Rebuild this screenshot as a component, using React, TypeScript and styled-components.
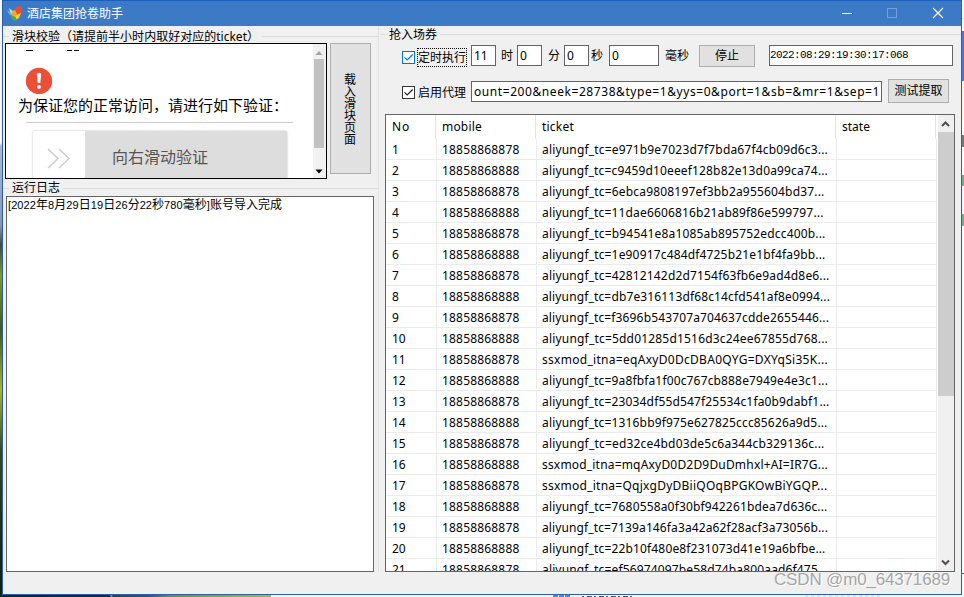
import React, { useLayoutEffect, useRef, useState } from "react";
import styled, { createGlobalStyle } from "styled-components";

const Global = createGlobalStyle`
  * { box-sizing: border-box; }
  html, body { margin: 0; padding: 0; overflow: hidden; }
  body {
    font-family: "Noto Sans", "Noto Sans CJK SC", sans-serif;
    font-size: 12px;
    color: #000;
  }
`;

const Desktop = styled.div`
  width: 964px;
  height: 597px;
  display: grid;
  grid-template-columns: 2px 960px 2px;
  grid-template-rows: 595px 2px;
  overflow: hidden;
`;

const LeftEdge = styled.div`
  background: linear-gradient(#f4f6fa 0 143px, #a9b9da 146px, #8798b5 225px, #3f4a44 245px, #7b9a2d 275px, #3b5a1c 330px, #a4b72c 390px, #33491a 450px, #1b2a18 540px, #11200f);
`;

const RightEdge = styled.div`
  background: linear-gradient(#fff 0 18px, #d9e5f2 18px 19px, #fff 19px 31px, #4a74e8 31px 81px, #fdf4e3 81px 120px, #fff 120px 135px, #777 135px 147px, #fff 147px 175px, #62b990 175px 186px, #f2f5fc 186px 214px, #62b990 214px 226px, #f5fdff 226px 573px, #3574ad 573px 574px, #f5fdff 574px);
`;

const BottomEdge = styled.div`
  grid-column: 1 / -1;
  display: flex;
  background: #f1faff;
`;

const Meadow = styled.div`
  width: 271px;
  background: linear-gradient(90deg, #16281a, #173022 110px, #7fa0a0 111px, #2c4a26 113px, #3c5570 150px, #6f8f28 170px, #8fae2c 230px, #b2b52b);
`;

const Window = styled.div`
  display: flex;
  flex-direction: column;
  border: 1px solid #2a60a8;
  border-top-color: #1d60bc;
  background: #f0f0f0;
  position: relative;
`;

const TitleBar = styled.header`
  height: 25px;
  flex: none;
  display: flex;
  align-items: center;
  background: #3d7ac6;
  color: #fff;
  padding-left: 4px;
`;

const Title = styled.span`
  flex: 1;
  padding-left: 4px;
  line-height: 24px;
`;

const Controls = styled.div`
  display: flex;
  width: 119px;
  height: 25px;
`;

const Body = styled.main`
  flex: 1;
  display: flex;
  min-height: 0;
`;

const LeftPane = styled.section`
  width: 376px;
  flex: none;
  border-right: 1px solid #e0e0e0;
  height: 546px;
  display: flex;
  flex-direction: column;
`;

const RightPane = styled.section`
  flex: 1;
  min-width: 0;
  padding-left: 2px;
  display: flex;
  flex-direction: column;
`;

const Legend = styled.div<{ $h: number; $pad: number; $top?: number }>`
  height: ${(p) => p.$h}px;
  padding-top: ${(p) => p.$top ?? 0}px;
  flex: none;
  display: flex;
  align-items: center;
  white-space: nowrap;
  line-height: ${(p) => p.$h - (p.$top ?? 0)}px;
  &::before { content: ""; width: ${(p) => p.$pad - 3}px; margin-right: 3px; height: 1px; background: #dcdcdc; }
  &::after { content: ""; flex: 1; margin-left: 3px; height: 1px; background: #dcdcdc; }
`;

const SliderRow = styled.div`
  display: flex;
  gap: 3px;
  padding-left: 2px;
  height: 136px;
  flex: none;
`;

const Browser = styled.div`
  width: 322px;
  height: 136px;
  border: 1px solid #000;
  background: #fff;
  display: flex;
  overflow: hidden;
`;

const PageView = styled.div`
  width: 307px;
  display: flex;
  flex-direction: column;
  flex: none;
  overflow: hidden;
  > svg { display: block; flex: none; }
`;

const Notice = styled.div`
  padding-left: 12px;
  height: 23px;
  line-height: 22px;
  font-size: 15px;
  white-space: nowrap;
  flex: none;
`;

const Rule = styled.div`
  margin: 5px 0 8px 20px;
  height: 1px;
  width: 267px;
  background: #ccc;
  flex: none;
`;

const Slider = styled.div`
  margin-left: 27px;
  width: 254px;
  height: 56px;
  flex: none;
  display: flex;
  background: #ddd;
  border-radius: 2px;
  box-shadow: 0 0 2px #aaa;
`;

const Handle = styled.div`
  width: 52px;
  background: #fff;
  border-radius: 2px 0 0 2px;
`;

const SliderText = styled.div`
  padding-left: 27px;
  line-height: 52px;
  font-size: 16px;
  color: #555;
`;

const MiniScroll = styled.div`
  width: 13px;
  background: #f1f1f1;
  display: flex;
  flex-direction: column;
  align-items: center;
  padding-right: 1px;
`;

const MiniThumb = styled.div`
  width: 10px;
  height: 89px;
  background: #c1c1c1;
`;

const LoadButton = styled.button`
  width: 41px;
  height: 131px;
  padding: 0 14px 0 13px;
  border: 1px solid #adadad;
  background: #e1e1e1;
  font: 12px/12px "Noto Sans CJK SC", sans-serif;
  color: #000;
  word-break: break-all;
`;

const Log = styled.div`
  margin-left: 3px;
  width: 368px;
  height: 377px;
  border: 1px solid #646464;
  background: #fff;
  padding-left: 1px;
  line-height: 13px;
  white-space: nowrap;
  font-family: "Noto Sans CJK SC", sans-serif;
`;

const HalfWidth = styled.span`
  font: 11px/13px "Liberation Sans", sans-serif;
  letter-spacing: 0.1px;
`;

const Form = styled.div<{ $h: number }>`
  display: flex;
  align-items: center;
  height: ${(p) => p.$h}px;
  flex: none;
  padding-left: 21px;
  white-space: nowrap;
`;

const ProxyForm = styled(Form)`
  margin-top: 11px;
`;

const Check = styled.span<{ $active?: boolean }>`
  width: 13px;
  height: 13px;
  flex: none;
  margin-top: ${(p) => (p.$active ? 4 : 2)}px;
  border: 1px solid ${(p) => (p.$active ? "#0078d7" : "#333")};
  color: ${(p) => (p.$active ? "#0078d7" : "#222")};
  background: #fff;
  svg { display: block; }
`;

const CheckLabel = styled.span<{ $active?: boolean }>`
  margin: ${(p) => (p.$active ? "3px 4px 0 2px" : "2px 4px 0 2px")};
  width: 50px;
  height: 19px;
  line-height: 17px;
  border: 1px ${(p) => (p.$active ? "dotted #000" : "solid transparent")};
`;

const Input = styled.div<{ $w: number; $mono?: boolean }>`
  width: ${(p) => p.$w}px;
  height: 21px;
  flex: none;
  border: 1px solid #646464;
  background: #fff;
  padding-left: ${(p) => (p.$mono ? 0 : 2)}px;
  line-height: ${(p) => (p.$mono ? 18 : 19)}px;
  overflow: hidden;
  ${(p) => p.$mono && 'font-family: "Liberation Mono", monospace; font-size: 11px;'}
`;

const Unit = styled.span<{ $w: number; $pad: number }>`
  width: ${(p) => p.$w}px;
  padding-left: ${(p) => p.$pad}px;
  flex: none;
  line-height: 20px;
`;

const Button = styled.button<{ $w: number; $h: number; $ml: number }>`
  width: ${(p) => p.$w}px;
  height: ${(p) => p.$h}px;
  margin-left: ${(p) => p.$ml}px;
  flex: none;
  padding: 0 0 2px;
  border: 1px solid #adadad;
  background: #e1e1e1;
  font: 12px/18px "Noto Sans CJK SC", sans-serif;
  color: #000;
`;

const Spacer = styled.span<{ $w: number }>`
  width: ${(p) => p.$w}px;
  flex: none;
`;

const Grid = styled.div`
  margin: 11px 0 0 4px;
  width: 570px;
  height: 458px;
  border: 1px solid #646464;
  background: #fff;
  display: flex;
  overflow: hidden;
`;

const Table = styled.div`
  width: 552px;
  flex: none;
`;

const HeadRow = styled.div`
  display: grid;
  grid-template-columns: 50px 100px 300px 100px;
  height: 24px;
  line-height: 23px;
`;

const HeadCell = styled.div`
  border-right: 1px solid #e4e4e4;
  padding-left: 6px;
`;

const Row = styled.div`
  display: grid;
  grid-template-columns: 51px 100px 300px 100px;
  width: 551px;
  height: 21px;
  line-height: 21px;
  border-bottom: 1px solid #ececec;
`;

const Cell = styled.div<{ $first?: boolean }>`
  border-right: 1px solid #ececec;
  padding-left: ${(p) => (p.$first ? 6 : 5)}px;
  white-space: nowrap;
  overflow: hidden;
`;

const ScrollBar = styled.div`
  width: 16px;
  background: #f0f0f0;
  display: flex;
  flex-direction: column;
  svg { display: block; }
`;

const Thumb = styled.div`
  height: 264px;
  background: #cdcdcd;
`;

const Gap = styled.div`
  flex: 1;
`;

const Watermark = styled.div`
  position: absolute;
  right: 11px;
  bottom: 4px;
  font: 17px/20px "Liberation Sans", sans-serif;
  color: #a6a6a6;
  text-shadow: 1px 1px 0 #fff;
  white-space: nowrap;
`;

const FitSpan = styled.span`
  display: inline-block;
  white-space: nowrap;
`;

/** Spreads the text evenly so that it occupies the given width. */
function Fit({ w, children }: { w: number; children: string }) {
  const ref = useRef<HTMLSpanElement>(null);
  const [spacing, setSpacing] = useState(0);
  useLayoutEffect(() => {
    if (ref.current) {
      const natural = ref.current.getBoundingClientRect().width;
      setSpacing((w - natural) / children.length);
    }
  }, [w, children]);
  return (
    <FitSpan ref={ref} style={{ letterSpacing: spacing }}>
      {children}
    </FitSpan>
  );
}

const tickets: [string, number][] = [
  ["aliyungf_tc=e971b9e7023d7f7bda67f4cb09d6c3...", 286],
  ["aliyungf_tc=c9459d10eeef128b82e13d0a99ca74...", 286],
  ["aliyungf_tc=6ebca9808197ef3bb2a955604bd37...", 282.5],
  ["aliyungf_tc=11dae6606816b21ab89f86e599797...", 281.5],
  ["aliyungf_tc=b94541e8a1085ab895752edcc400b...", 283.5],
  ["aliyungf_tc=1e90917c484df4725b21e1bf4fa9bb...", 283.5],
  ["aliyungf_tc=42812142d2d7154f63fb6e9ad4d8e6...", 287.5],
  ["aliyungf_tc=db7e316113df68c14cfd541af8e0994...", 288],
  ["aliyungf_tc=f3696b543707a704637cdde2655446...", 287],
  ["aliyungf_tc=5dd01285d1516d3c24ee67855d768...", 286],
  ["ssxmod_itna=eqAxyD0DcDBA0QYG=DXYqSi35K...", 286],
  ["aliyungf_tc=9a8fbfa1f00c767cb888e7949e4e3c1...", 286],
  ["aliyungf_tc=23034df55d547f25534c1fa0b9dabf1...", 287.5],
  ["aliyungf_tc=1316bb9f975e627825ccc85626a9d5...", 285.5],
  ["aliyungf_tc=ed32ce4bd03de5c6a344cb329136c...", 282.5],
  ["ssxmod_itna=mqAxyD0D2D9DuDmhxl+AI=IR7G...", 286],
  ["ssxmod_itna=QqjxgDyDBiiQOqBPGKOwBiYGQP...", 285.5],
  ["aliyungf_tc=7680558a0f30bf942261bdea7d636c...", 285.5],
  ["aliyungf_tc=7139a146fa3a42a62f28acf3a73056b...", 286],
  ["aliyungf_tc=22b10f480e8f231073d41e19a6bfbe...", 283.5],
  ["aliyungf_tc=ef56974097be58d74ba800aad6f475...", 286],
];

const logLine = "[2022年8月29日19日26分22秒780毫秒]账号导入完成";

const Tick = () => (
  <svg width="11" height="11" viewBox="0 0 11 11" fill="none" stroke="currentColor" strokeWidth="1.2">
    <path d="M1.5 5.3 4.2 8 9.7 2.5" />
  </svg>
);

const Parrot = () => (
  <svg width="16" height="16" viewBox="0 0 16 16">
    <path d="M0 4 5 7 6 11 2 8Z" fill="#59b7de" />
    <path d="M2 2 7 6 7 10 3 6Z" fill="#b9dbe8" />
    <path d="M8 2 12 0 15 1 15 7 12 11 7 9Z" fill="#ef4b2c" />
    <path d="M5 5 8 4 10 8 8 12 5 10Z" fill="#f7a72b" />
    <path d="M9 9 14 7 12 12 8 14Z" fill="#f7d13d" />
    <path d="M4 9 8 11 10 14 7 15 4 12Z" fill="#4ca848" />
  </svg>
);

export default function App() {
  return (
    <>
      <Global />
      <Desktop>
        <LeftEdge />
        <Window>
          <TitleBar>
            <Parrot />
            <Title>酒店集团抢卷助手</Title>
            <Controls>
              <svg width="119" height="25" fill="none" stroke="#fff">
                <path d="M0 12.5H10" />
                <rect x="45.500" y="7.500" width="9" height="9" stroke="#6da1df" />
                <path d="M91 7 101 17M101 7 91 17" strokeWidth="1.2" />
              </svg>
            </Controls>
          </TitleBar>
          <Body>
            <LeftPane>
              <Legend $h={17} $pad={9} $top={4}>
                <Fit w={247}>滑块校验（请提前半小时内取好对应的ticket）</Fit>
              </Legend>
              <SliderRow>
                <Browser>
                  <PageView>
                    <svg width="307" height="50">
                      <path d="M20 6.500H27M61 6.500H66M68 6.500H73" stroke="#000" />
                      <circle cx="33" cy="37" r="13.200" fill="#eb4f38" />
                      <path d="M30.800 29.500Q33 28 35.200 29.500L34.300 39H31.700Z" fill="#fff" />
                      <circle cx="33" cy="43" r="1.900" fill="#fff" />
                    </svg>
                    <Notice>为保证您的正常访问，请进行如下验证：</Notice>
                    <Rule />
                    <Slider>
                      <Handle>
                        <svg width="52" height="54" fill="none" stroke="#ccc" strokeWidth="1.500">
                          <path d="M15 18 25 27.500 15 37M26 18 36 27.500 26 37" />
                        </svg>
                      </Handle>
                      <SliderText>向右滑动验证</SliderText>
                    </Slider>
                  </PageView>
                  <MiniScroll>
                    <svg width="12" height="15"><path d="M2.500 11 6 7 9.500 11Z" fill="#a3a3a3" /></svg>
                    <MiniThumb />
                    <svg width="12" height="30"><path d="M2.500 21.500H9.500L6 25.500Z" fill="#000" /></svg>
                  </MiniScroll>
                </Browser>
                <LoadButton>载入滑块页面</LoadButton>
              </SliderRow>
              <Legend $h={17} $pad={9} $top={1}>运行日志</Legend>
              <Log>
                {logLine.split(/([\x20-\x7e]+)/).map((part, i) =>
                  i % 2 ? <HalfWidth key={i}>{part}</HalfWidth> : part
                )}
              </Log>
            </LeftPane>
            <RightPane>
              <Legend $h={17} $pad={8}>抢入场券</Legend>
              <Form $h={25}>
                <Check $active><Tick /></Check>
                <CheckLabel $active>定时执行</CheckLabel>
                <Input $w={25}>11</Input>
                <Unit $w={21} $pad={5}>时</Unit>
                <Input $w={25}>0</Input>
                <Unit $w={22} $pad={6}>分</Unit>
                <Input $w={25}>0</Input>
                <Unit $w={20} $pad={2}>秒</Unit>
                <Input $w={50}>0</Input>
                <Unit $w={30} $pad={6}>毫秒</Unit>
                <Button $w={56} $h={22} $ml={10}>停止</Button>
                <Spacer $w={14} />
                <Input $w={184} $mono><Fit w={138}>2022:08:29:19:30:17:068</Fit></Input>
              </Form>
              <ProxyForm $h={24}>
                <Check><Tick /></Check>
                <CheckLabel>启用代理</CheckLabel>
                <Input $w={411}>
                  <Fit w={406}>ount=200&neek=28738&type=1&yys=0&port=1&sb=&mr=1&sep=1</Fit>
                </Input>
                <Button $w={61} $h={24} $ml={6}>测试提取</Button>
              </ProxyForm>
              <Grid>
                <Table>
                  <HeadRow>
                    <HeadCell><Fit w={18}>No</Fit></HeadCell>
                    <HeadCell><Fit w={40}>mobile</Fit></HeadCell>
                    <HeadCell><Fit w={32}>ticket</Fit></HeadCell>
                    <HeadCell><Fit w={28}>state</Fit></HeadCell>
                  </HeadRow>
                  {tickets.map(([ticket, w], i) => (
                    <Row key={i}>
                      <Cell $first>{i + 1}</Cell>
                      <Cell><Fit w={77.5}>{i % 2 ? "18858868888" : "18858868878"}</Fit></Cell>
                      <Cell><Fit w={w}>{ticket}</Fit></Cell>
                      <Cell />
                    </Row>
                  ))}
                </Table>
                <ScrollBar>
                  <svg width="16" height="17" fill="none" stroke="#505050" strokeWidth="2">
                    <path d="M4 11 7.500 7.500 11 11" />
                  </svg>
                  <Thumb />
                  <Gap />
                  <svg width="16" height="17" fill="none" stroke="#505050" strokeWidth="2">
                    <path d="M4 6.500 7.500 10 11 6.500" />
                  </svg>
                </ScrollBar>
              </Grid>
            </RightPane>
          </Body>
          <Watermark><Fit w={176}>CSDN @m0_64371689</Fit></Watermark>
        </Window>
        <RightEdge />
        <BottomEdge>
          <Meadow />
          <svg width="693" height="2">
            <path d="M282 1H300" stroke="#4c86f0" strokeWidth="2" strokeDasharray="5 1" />
            <path d="M311 1.500H362" stroke="#555" strokeDasharray="2 3 5 2" />
            <path d="M534 1H610" stroke="#c5d7f6" strokeDasharray="3 3" />
          </svg>
        </BottomEdge>
      </Desktop>
    </>
  );
}
